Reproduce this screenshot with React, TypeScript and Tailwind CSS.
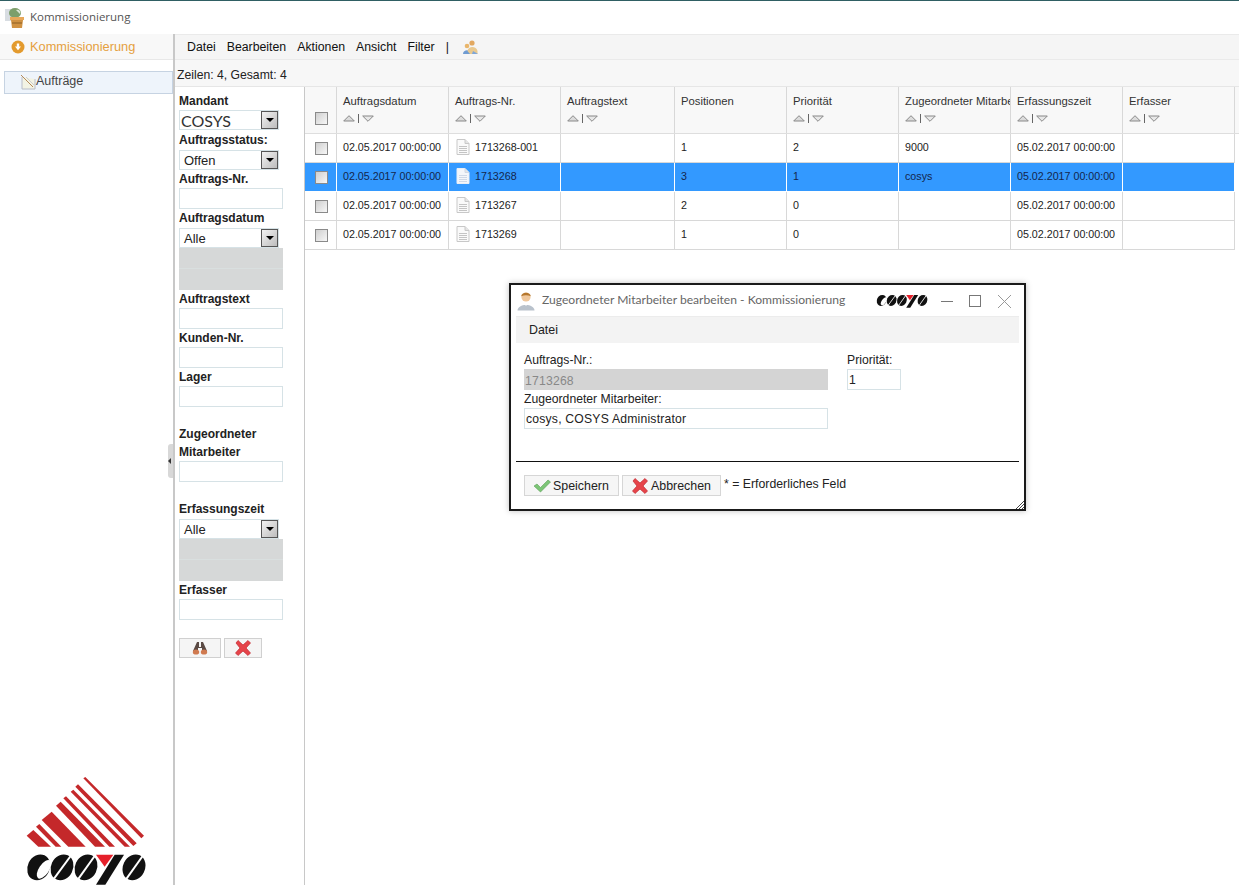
import React from "react";

const FONT = "font-['Liberation_Sans',Arial,sans-serif]";

function CosysLetters({ className }: { className?: string }) {
  const rounds = [50, 120, 192, 336];
  return (
    <svg className={className} viewBox="0 0 378 105" aria-hidden="true">
      {rounds.map((cx) => (
        <g key={cx}>
          <ellipse cx={cx} cy={52} rx={33} ry={40} fill="#111" transform={`rotate(26 ${cx} 52)`} />
          {cx === 50 ? (
            <ellipse cx={66} cy={58} rx={15} ry={32} fill="#fff" transform="rotate(34 66 58)" />
          ) : (
            <path d={`M${cx - 24} ${cx === 120 ? 86 : 88} L${cx + 26} 18`} stroke="#fff" strokeWidth={6} />
          )}
        </g>
      ))}
      <path d="M278 14 L306 14 L250 104 L222 104 Z" fill="#111" />
      <path d="M222 14 L274 14 L248 50 Z" fill="#e5202a" />
    </svg>
  );
}

function CosysLogo() {
  const stripes = [
    "M250 40 L256 36 L432 212 L424 220 Z",
    "M226 65 L234 58 L410 235 L400 243 Z",
    "M212 80 L220 74 L390 245 L374 245 Z",
    "M190 100 L198 94 L345 245 L328 245 Z",
    "M168 122 L182 110 L315 245 L285 245 Z",
    "M125 165 L155 140 L257 245 L205 245 Z",
    "M108 185 L118 177 L184 245 L167 245 Z",
    "M80 212 L100 195 L153 245 L115 245 Z",
  ];
  return (
    <div className="flex flex-col">
      <svg className="ml-[3px] h-[73px] w-[120px]" viewBox="75 30 360 219" aria-hidden="true">
        {stripes.map((d) => (
          <path key={d} d={d} fill="#c4282a" />
        ))}
      </svg>
      <CosysLetters className="mt-[2px] h-[35px] w-[126px]" />
    </div>
  );
}

function DocIcon({ active }: { active?: boolean }) {
  const line = active ? "#cfd8e6" : "#c4c4c4";
  return (
    <svg width="14" height="16" viewBox="0 0 14 16" className="shrink-0" aria-hidden="true">
      <path d="M1 .5 H9 L13 4.5 V15.5 H1 Z" fill={active ? "#f4f6fa" : "#fafafa"} stroke={active ? "#e8edf5" : "#c8c8c8"} />
      <path d="M9 .5 V4.5 H13" fill="#e4e4e4" stroke={active ? "#cfd8e6" : "#c8c8c8"} />
      <path d="M3 7.5H11M3 9.5H11M3 11.5H11M3 13.5H11" stroke={line} />
    </svg>
  );
}

function Check() {
  return <span className="ml-[1px] block h-[13px] w-[13px] border border-[#8a8a8a] bg-gradient-to-br from-[#cfcfcf] to-[#f7f7f7]" />;
}

function SortIcons() {
  return (
    <span className="mt-[4px] flex h-[10px] items-center gap-[3px]">
      <svg width="12" height="7" viewBox="0 0 12 7" aria-hidden="true">
        <path d="M6 .7 L11.3 6 H.7 Z" fill="#dcdcdc" stroke="#888" />
      </svg>
      <span className="h-[9px] w-px bg-[#666]" />
      <svg width="12" height="7" viewBox="0 0 12 7" aria-hidden="true">
        <path d="M.7 1 H11.3 L6 6.3 Z" fill="#e8e8e8" stroke="#888" />
      </svg>
    </span>
  );
}

function CrossIcon() {
  return (
    <svg width="18" height="18" viewBox="0 0 18 18" aria-hidden="true">
      <path d="M2 4 L4 1.5 L9 6 L14 1.5 L16.5 4 L12 9 L16.5 14 L14 16.5 L9 12 L4 16.5 L1.5 14 L6 9 Z" fill="#e6444a" stroke="#c22a30" strokeWidth=".7" strokeLinejoin="round" />
    </svg>
  );
}

function Label({ children, className = "h-[18px]" }: { children: React.ReactNode; className?: string }) {
  return <div className={`flex items-center text-[12px] font-bold text-[#222] ${className}`}>{children}</div>;
}

function Field() {
  return <div className="h-[21px] w-[104px] shrink-0 border border-[#d6e2e6] bg-white" />;
}

function Select({ value, large }: { value: string; large?: boolean }) {
  return (
    <div className="flex h-[20px] w-[100px] shrink-0 items-center border border-[#d6e2e6] bg-white">
      <span className={large ? "ml-[1px] flex-1 pt-[2px] font-['Lato',sans-serif] text-[16px] text-[#333]" : "ml-[4px] flex-1 pt-[2px] text-[13px] text-[#222]"}>{value}</span>
      <span className="flex h-[18px] w-[17px] items-center justify-center border border-[#555] bg-gradient-to-br from-[#f2f2f2] to-[#bdbdbd]">
        <span className="h-0 w-0 border-x-[4px] border-t-[4px] border-x-transparent border-t-black" />
      </span>
    </div>
  );
}

function GreyBlock() {
  return (
    <div className="flex h-[42px] w-[104px] shrink-0 flex-col">
      <div className="h-[21px] border-b border-[#d9dfdf] bg-[#d6d8d8]" />
      <div className="h-[21px] bg-[#d6d8d8]" />
    </div>
  );
}

function AppIcon() {
  return (
    <svg width="20" height="22" viewBox="0 0 20 22" aria-hidden="true">
      <rect x="0" y="2" width="6" height="12" fill="#d8dde2" />
      <ellipse cx="10" cy="6" rx="6" ry="5" fill="#7d9f6b" />
      <path d="M11 3 a3 3 0 0 1 4 4 z" fill="#dfe8d8" />
      <rect x="5" y="10" width="14" height="3" fill="#e8a85a" />
      <path d="M6 13 H18 L17 21 H7 Z" fill="#d09243" />
      <path d="M7 16 H17" stroke="#8b5f25" />
    </svg>
  );
}

function UsersIcon() {
  return (
    <svg width="17" height="16" viewBox="0 0 17 16" aria-hidden="true">
      <circle cx="5" cy="7" r="2.3" fill="#e9b66c" />
      <path d="M1 15 C1 10 9 10 9 15 Z" fill="#6f9bd1" />
      <circle cx="10" cy="4" r="2.6" fill="#e2a860" />
      <path d="M5.5 12 C6 6.5 14.5 6.5 15.5 12 L15.5 15 H8 Z" fill="#e9c98f" />
      <path d="M11 12 L16 15 H10 Z" fill="#7ea6d8" />
    </svg>
  );
}

function PersonIcon() {
  return (
    <svg width="18" height="20" viewBox="0 0 18 20" aria-hidden="true" className="shrink-0">
      <circle cx="9" cy="6" r="4.6" fill="#efc79c" />
      <path d="M4.2 5.2 C4.5 0.5 13.5 0.5 13.8 5.2 C11 3.8 7 3.8 4.2 5.2 Z" fill="#b5772d" />
      <path d="M0.5 19.5 C0.5 12 17.5 12 17.5 19.5 Z" fill="#b9c2cc" />
      <path d="M7 12.5 L9 15 L11 12.5 Z" fill="#fff" />
    </svg>
  );
}

const widths = ["w-[32px]", "w-[112px]", "w-[112px]", "w-[114px]", "w-[112px]", "w-[112px]", "w-[112px]", "w-[112px]", "w-[112px]"];

const headers = [
  { t: "Auftragsdatum", s: true },
  { t: "Auftrags-Nr.", s: true },
  { t: "Auftragstext", s: true },
  { t: "Positionen", s: false },
  { t: "Priorität", s: true },
  { t: "Zugeordneter Mitarbeiter", s: true },
  { t: "Erfassungszeit", s: true },
  { t: "Erfasser", s: true },
];

const rows = [
  ["02.05.2017 00:00:00", "1713268-001", "", "1", "2", "9000", "05.02.2017 00:00:00", ""],
  ["02.05.2017 00:00:00", "1713268", "", "3", "1", "cosys", "05.02.2017 00:00:00", ""],
  ["02.05.2017 00:00:00", "1713267", "", "2", "0", "", "05.02.2017 00:00:00", ""],
  ["02.05.2017 00:00:00", "1713269", "", "1", "0", "", "05.02.2017 00:00:00", ""],
];

export default function App() {
  return (
    <div className={`relative flex h-[885px] w-[1239px] flex-col overflow-hidden bg-white ${FONT}`}>
      <div className="h-px bg-[#2f5f63]" />
      <header className="flex h-[33px] shrink-0 items-center gap-[5px] pl-[5px]">
        <AppIcon />
        <span className="pb-[2px] font-['Open_Sans',sans-serif] text-[11.5px] text-[#555]">Kommissionierung</span>
      </header>

      <div className="flex min-h-0 flex-1">
        <aside className="flex w-[173px] shrink-0 flex-col">
          <div className="flex h-[26px] shrink-0 items-center gap-[5px] border-b border-[#e8e8e8] bg-[#f8f8f8] pl-[11px]">
            <svg width="14" height="14" viewBox="0 0 14 14" aria-hidden="true">
              <circle cx="7" cy="7" r="6.5" fill="#e39a2d" />
              <path d="M5.8 3.5 H8.2 V6.5 H10 L7 10.2 L4 6.5 H5.8 Z" fill="#fff" />
            </svg>
            <span className="text-[12.8px] text-[#e5a040]">Kommissionierung</span>
          </div>
          <div className="ml-[4px] mt-[11px] flex h-[23px] shrink-0 items-center border border-[#c6d3e2] bg-[#eef4fb] pl-[15px]">
            <svg width="16" height="17" viewBox="0 0 16 17" aria-hidden="true" className="shrink-0">
              <path d="M2 3 V15 H15 V5" fill="#f3f3e4" stroke="#b8bcc8" />
              <path d="M1 1 L13 13" stroke="#b58a5a" />
              <path d="M6 3 L14 11" stroke="#cfcfcf" />
            </svg>
            <span className="pb-[2px] text-[12.5px] text-[#444]">Aufträge</span>
          </div>
          <div className="mt-auto pl-[22px]">
            <CosysLogo />
          </div>
        </aside>

        <main className="relative flex min-w-0 flex-1 flex-col border-l-2 border-[#c8c8c8]">
          <span className="absolute left-[-7px] top-[410px] flex h-[34px] w-[5px] items-center rounded-l-[3px] bg-[#d8d8d8]">
            <span className="h-0 w-0 border-y-[3px] border-r-[3px] border-y-transparent border-r-[#333]" />
          </span>

          <nav className="flex h-[26px] shrink-0 items-center gap-[11px] border-y border-[#eaeaea] bg-[#f5f5f5] pl-[12px] text-[12.3px] text-[#111]">
            <span>Datei</span>
            <span>Bearbeiten</span>
            <span>Aktionen</span>
            <span>Ansicht</span>
            <span>Filter</span>
            <span>|</span>
            <span className="ml-[2px]">
              <UsersIcon />
            </span>
          </nav>
          <div className="flex h-[27px] shrink-0 items-center border-b border-[#e6e6e6] bg-[#f7f7f7] pl-[2px] pt-[4px] text-[12.2px] text-[#222]">
            Zeilen: 4, Gesamt: 4
          </div>

          <div className="flex min-h-0 flex-1">
            <section className="flex w-[130px] shrink-0 flex-col border-r border-[#c8c8c8] pl-[4px] pt-[5px]">
              <Label>Mandant</Label>
              <Select value="COSYS" large />
              <Label className="h-[20px]">Auftragsstatus:</Label>
              <Select value="Offen" />
              <Label>Auftrags-Nr.</Label>
              <Field />
              <Label className="h-[19px] pb-[2px]">Auftragsdatum</Label>
              <Select value="Alle" />
              <GreyBlock />
              <Label>Auftragstext</Label>
              <Field />
              <Label>Kunden-Nr.</Label>
              <Field />
              <Label>Lager</Label>
              <Field />
              <Label className="mt-[18px] h-[18px]">Zugeordneter</Label>
              <Label>Mitarbeiter</Label>
              <Field />
              <Label className="mt-[18px] h-[19px] pb-[2px]">Erfassungszeit</Label>
              <Select value="Alle" />
              <GreyBlock />
              <Label>Erfasser</Label>
              <Field />
              <div className="mt-[18px] flex gap-[3px]">
                <button className="flex h-[20px] w-[42px] items-center justify-center border border-[#d0d0d0] bg-[#f5f5f5]">
                  <svg width="16" height="14" viewBox="0 0 16 14" aria-hidden="true">
                    <path d="M5 1 H7 V6 H9 V1 H11 L15 10 H10 V7 H6 V10 H1 Z" fill="#5a4a44" />
                    <ellipse cx="4" cy="11" rx="3.2" ry="2.6" fill="#d07a50" />
                    <ellipse cx="12" cy="11" rx="3.2" ry="2.6" fill="#d07a50" />
                  </svg>
                </button>
                <button className="flex h-[20px] w-[38px] items-center justify-center border border-[#d0d0d0] bg-[#f5f5f5]">
                  <CrossIcon />
                </button>
              </div>
            </section>

            <section className="min-w-0 flex-1">
              <div className="border-b border-[#dedede] bg-[#f8f8f8]">
                <div className="flex h-[46px] w-[930px] text-[11.3px] text-[#333]">
                  <div className={`flex ${widths[0]} shrink-0 items-end justify-center border-r border-[#d8d8d8] pb-[8px]`}>
                    <Check />
                  </div>
                  {headers.map((h, i) => (
                    <div key={h.t} className={`${widths[i + 1]} shrink-0 overflow-hidden whitespace-nowrap border-r border-[#d8d8d8] pl-[6px] pt-[7px]`}>
                      <div className="h-[15px] leading-[14px]">{h.t}</div>
                      {h.s && <SortIcons />}
                    </div>
                  ))}
                </div>
              </div>
              {rows.map((r, ri) => {
                const sel = ri === 1;
                return (
                  <div key={ri} className={`flex h-[29px] w-[930px] border-b text-[10.7px] ${sel ? "border-white text-[#14264d]" : "border-[#d8d8d8] text-[#222]"}`}>
                    <div className={`flex ${widths[0]} shrink-0 items-center justify-center border-r ${sel ? "border-white bg-[#3399ff]" : "border-[#d8d8d8]"}`}>
                      <Check />
                    </div>
                    {r.map((c, i) => (
                      <div key={i} className={`flex ${widths[i + 1]} shrink-0 items-center gap-[5px] border-r pb-[2px] pl-[6px] ${sel ? "border-white bg-[#3399ff]" : "border-[#d8d8d8]"}`}>
                        {i === 1 && (
                          <span className="ml-[1px]">
                            <DocIcon active={sel} />
                          </span>
                        )}
                        {c}
                      </div>
                    ))}
                  </div>
                );
              })}
            </section>
          </div>
        </main>
      </div>

      <div className="absolute left-[509px] top-[283px] flex h-[228px] w-[517px] flex-col border-2 border-[#1a1a1a] bg-white px-[5px] shadow-[0_0_6px_rgba(0,0,0,0.25)]">
        <div className="flex h-[32px] shrink-0 items-center border-b border-[#ececec] pl-[1px]">
          <PersonIcon />
          <span className="ml-[7px] w-[303px] shrink-0 whitespace-nowrap font-['Lato',sans-serif] text-[12.1px] text-[#666]">Zugeordneter Mitarbeiter bearbeiten - Kommissionierung</span>
          <CosysLetters className="ml-[27px] h-[15px] w-[59px] shrink-0" />
          <svg width="88" height="16" viewBox="0 0 88 16" className="shrink-0" aria-hidden="true" stroke="#777" fill="none">
            <path d="M10 8.5 H22" />
            <rect x="38.5" y="2.5" width="11" height="11" />
            <path d="M67 2 L80 15 M80 2 L67 15" stroke="#999" />
          </svg>
        </div>
        <div className="flex h-[26px] shrink-0 items-center bg-[#f3f3f3] pl-[13px] text-[12.4px] text-[#222]">Datei</div>

        <div className="flex h-[119px] shrink-0 border-b border-[#111] pl-[8px] pt-[8px] text-[12.2px] text-[#222]">
          <div className="w-[323px]">
            <div className="flex h-[18px] items-center">Auftrags-Nr.:</div>
            <div className="flex h-[21px] w-[304px] items-center bg-[#d4d4d4] pl-[1px] pt-[3px] tracking-[0.2px] text-[#888]">1713268</div>
            <div className="flex h-[18px] items-center">Zugeordneter Mitarbeiter:</div>
            <div className="flex h-[21px] w-[304px] items-center border border-[#d6e2e6] pl-[1px] pt-[2px] tracking-[0.2px]">cosys, COSYS Administrator</div>
          </div>
          <div>
            <div className="flex h-[18px] items-center">Priorität:</div>
            <div className="flex h-[21px] w-[54px] items-center border border-[#d6e2e6] pl-[1px] pt-[2px]">1</div>
          </div>
        </div>

        <div className="flex pl-[8px] pt-[13px] text-[12.4px] text-[#222]">
          <button className="flex h-[21px] w-[95px] items-center gap-[2px] border border-[#d6d6d6] bg-[#f6f6f6] pl-[8px]">
            <svg width="18" height="14" viewBox="0 0 18 14" aria-hidden="true">
              <path d="M1 7 L4 5 L7.5 8.5 L15 1 L17.5 3 L7.5 13 Z" fill="#7cc576" stroke="#5c9f58" strokeWidth=".6" />
            </svg>
            <span className="pt-[1px]">Speichern</span>
          </button>
          <button className="ml-[3px] flex h-[21px] w-[99px] items-center gap-[2px] border border-[#d6d6d6] bg-[#f6f6f6] pl-[8px]">
            <CrossIcon />
            <span className="pt-[1px]">Abbrechen</span>
          </button>
          <span className="ml-[3px] flex h-[19px] items-center text-[12.3px]">* = Erforderliches Feld</span>
        </div>

        <svg width="8" height="8" viewBox="0 0 8 8" className="absolute bottom-0 right-0" aria-hidden="true" stroke="#444">
          <path d="M8 0 L0 8 M8 3 L3 8 M8 6 L6 8" />
        </svg>
      </div>
    </div>
  );
}
